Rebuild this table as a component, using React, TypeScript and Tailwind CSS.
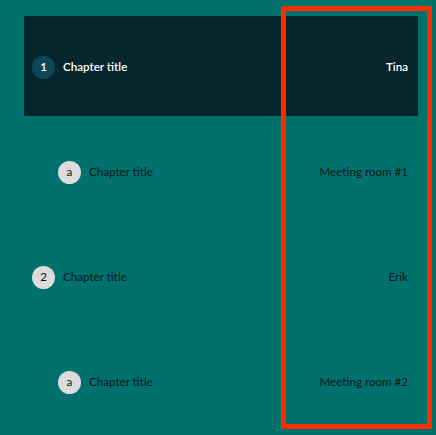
import React from "react";

type Row = { badge: string; title: string; right: string; sub: boolean; active: boolean };

const rows: Row[] = [
  { badge: "1", title: "Chapter title", right: "Tina", sub: false, active: true },
  { badge: "a", title: "Chapter title", right: "Meeting room #1", sub: true, active: false },
  { badge: "2", title: "Chapter title", right: "Erik", sub: false, active: false },
  { badge: "a", title: "Chapter title", right: "Meeting room #2", sub: true, active: false },
];

export default function App() {
  return (
    <div
      className="relative w-[436px] h-[435px] bg-[#00716d] overflow-hidden"
      style={{ fontFamily: "Lato, 'Open Sans', sans-serif" }}
    >
      <div className="flex flex-col gap-[5px] pt-[16px] pl-[24px] pr-[18px]">
        {rows.map((r, i) => (
          <div
            key={i}
            className={
              "flex items-center h-[100px] pt-[2px] pr-[10px] text-[11.6px] " +
              (r.active ? "bg-[#06262d] text-white font-semibold " : "text-[#061519] ") +
              (r.sub ? "pl-[34px]" : "pl-[8px]")
            }
          >
            <div
              className={
                "flex items-center justify-center w-[23px] h-[23px] rounded-full text-[11.6px] " +
                (r.active ? "bg-[#0e4858] text-white" : "bg-[#dcdcdc] text-[#111]")
              }
            >
              {r.badge}
            </div>
            <span className="ml-[8px]">{r.title}</span>
            <span className="ml-auto">{r.right}</span>
          </div>
        ))}
      </div>
      <div className="absolute left-[281px] top-[6px] w-[151px] h-[423px] border-[5px] border-[#ff2a00]" />
    </div>
  );
}
